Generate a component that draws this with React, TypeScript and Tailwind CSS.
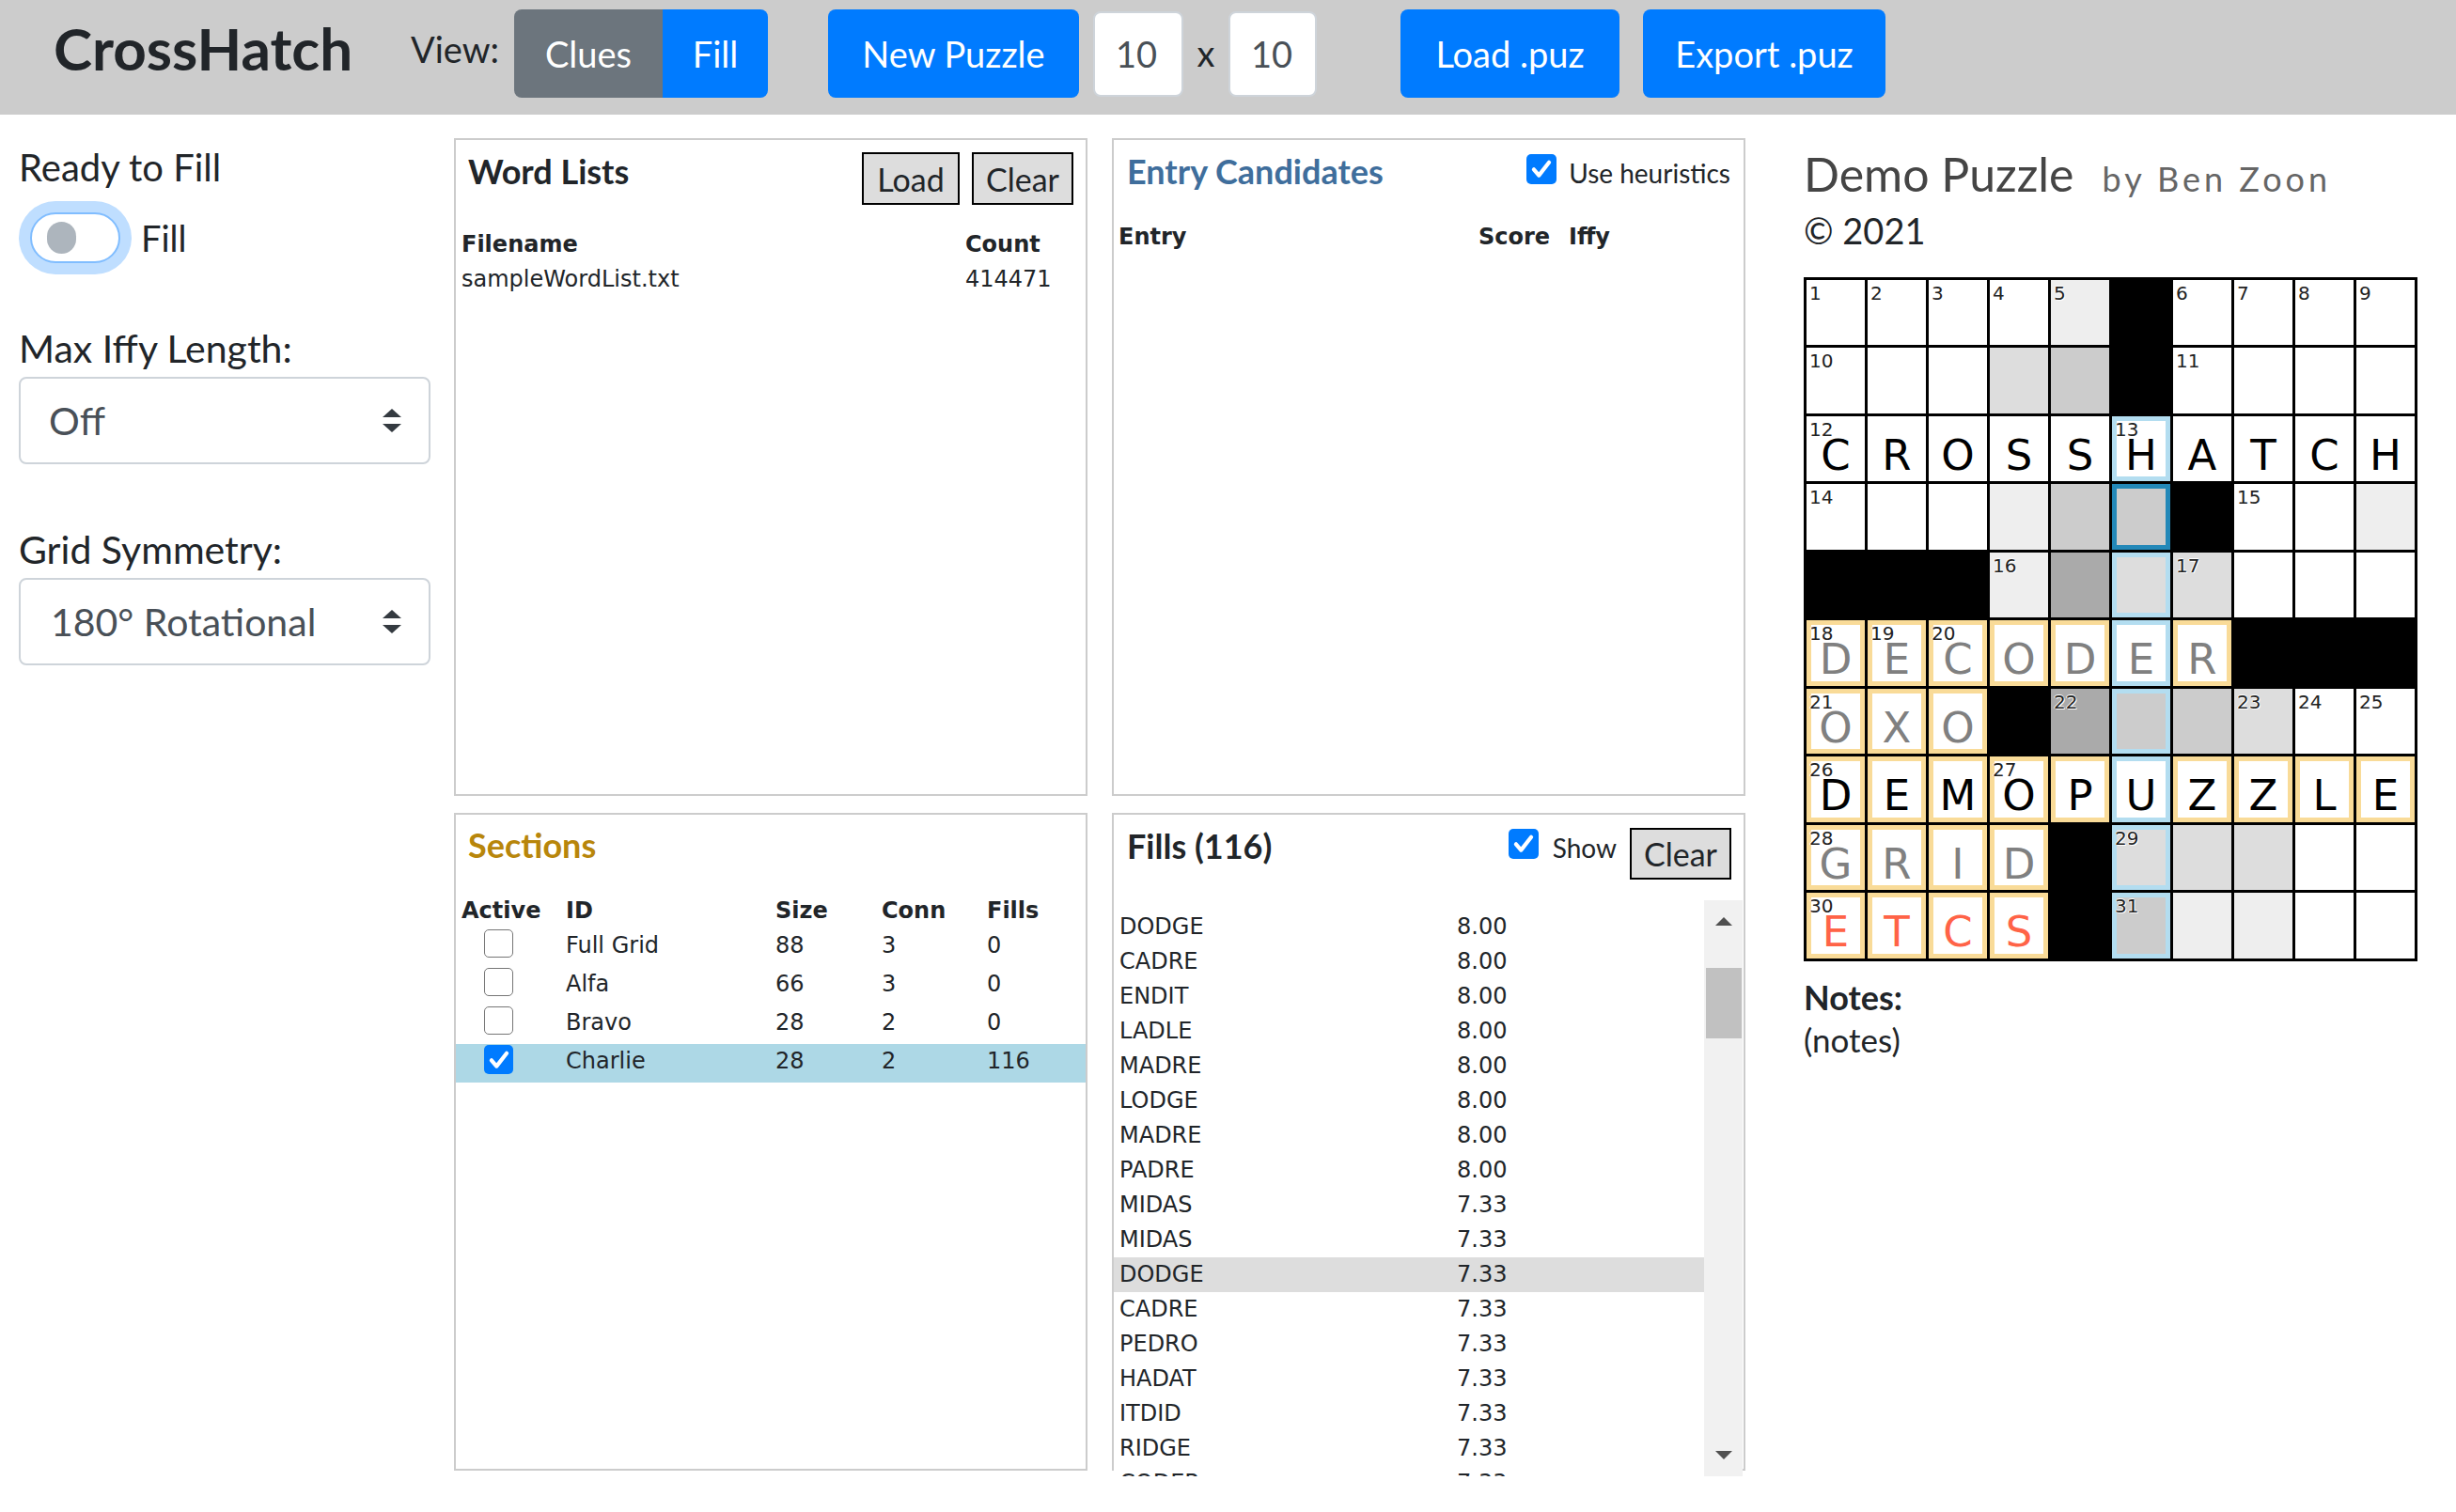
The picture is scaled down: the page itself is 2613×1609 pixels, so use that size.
import React from 'react';

type Cell = { b: string; n?: string; l?: string; c?: string; r?: string };

const BG: Record<string, string> = {
  w: 'bg-white',
  e: 'bg-[#eeeeee]',
  d: 'bg-[#dddddd]',
  c: 'bg-[#cccccc]',
  a: 'bg-[#aaaaaa]',
  B: 'bg-black',
};
const RING: Record<string, string> = {
  y: 'shadow-[inset_0_0_0_5px_#f9db98]',
  l: 'shadow-[inset_0_0_0_5px_#b3ddf0]',
  s: 'shadow-[inset_0_0_0_5px_#2388b8]',
};
const COL: Record<string, string> = {
  k: 'text-black',
  g: 'text-[#808080]',
  r: 'text-[#ff6347]',
};

const ROWS: string[][] = [
  ['w:1', 'w:2', 'w:3', 'w:4', 'e:5', 'B', 'w:6', 'w:7', 'w:8', 'w:9'],
  ['w:10', 'w', 'w', 'd', 'c', 'B', 'w:11', 'w', 'w', 'w'],
  ['w:12:C:k', 'w::R:k', 'w::O:k', 'w::S:k', 'w::S:k', 'w:13:H:k:l', 'w::A:k', 'w::T:k', 'w::C:k', 'w::H:k'],
  ['w:14', 'w', 'w', 'e', 'c', 'c::::s', 'B', 'w:15', 'w', 'e'],
  ['B', 'B', 'B', 'e:16', 'a', 'd::::l', 'd:17', 'w', 'w', 'w'],
  ['w:18:D:g:y', 'w:19:E:g:y', 'w:20:C:g:y', 'w::O:g:y', 'w::D:g:y', 'w::E:g:l', 'w::R:g:y', 'B', 'B', 'B'],
  ['w:21:O:g:y', 'w::X:g:y', 'w::O:g:y', 'B', 'a:22', 'c::::l', 'c', 'd:23', 'w:24', 'w:25'],
  ['w:26:D:k:y', 'w::E:k:y', 'w::M:k:y', 'w:27:O:k:y', 'w::P:k:y', 'w::U:k:l', 'w::Z:k:y', 'w::Z:k:y', 'w::L:k:y', 'w::E:k:y'],
  ['w:28:G:g:y', 'w::R:g:y', 'w::I:g:y', 'w::D:g:y', 'B', 'd:29:::l', 'd', 'd', 'w', 'w'],
  ['w:30:E:r:y', 'w::T:r:y', 'w::C:r:y', 'w::S:r:y', 'B', 'c:31:::l', 'e', 'e', 'w', 'w'],
];

function parse(s: string): Cell {
  const [b, n, l, c, r] = s.split(':');
  return { b, n: n || undefined, l: l || undefined, c: c || undefined, r: r || undefined };
}

const FILLS: [string, string][] = [
  ['DODGE', '8.00'], ['CADRE', '8.00'], ['ENDIT', '8.00'], ['LADLE', '8.00'], ['MADRE', '8.00'],
  ['LODGE', '8.00'], ['MADRE', '8.00'], ['PADRE', '8.00'], ['MIDAS', '7.33'], ['MIDAS', '7.33'],
  ['DODGE', '7.33'], ['CADRE', '7.33'], ['PEDRO', '7.33'], ['HADAT', '7.33'], ['ITDID', '7.33'],
  ['RIDGE', '7.33'], ['CODER', '7.33'],
];

const SECTIONS = [
  { id: 'Full Grid', size: '88', conn: '3', fills: '0', on: false },
  { id: 'Alfa', size: '66', conn: '3', fills: '0', on: false },
  { id: 'Bravo', size: '28', conn: '2', fills: '0', on: false },
  { id: 'Charlie', size: '28', conn: '2', fills: '116', on: true },
];

function CheckIcon() {
  return (
    <svg viewBox="0 0 16 16" className="w-[24px] h-[24px]">
      <path d="M2.6 8.2 L6.2 12.4 L13.4 3.2" fill="none" stroke="white" strokeWidth="2.8" strokeLinecap="round" strokeLinejoin="round" />
    </svg>
  );
}

function BlueCheck({ className }: { className?: string }) {
  return (
    <div className={`w-[32px] h-[32px] rounded-[5px] bg-[#007bff] flex items-center justify-center shrink-0 ${className ?? ''}`}>
      <CheckIcon />
    </div>
  );
}

function SelectArrows() {
  return (
    <svg viewBox="0 0 20 25" className="w-[20px] h-[25px]">
      <path d="M0 9 L10 0 L20 9 Z" fill="#343a40" />
      <path d="M0 16 L20 16 L10 25 Z" fill="#343a40" />
    </svg>
  );
}

function GridCell({ cell }: { cell: Cell }) {
  return (
    <div className={`relative ${BG[cell.b]} ${cell.r ? RING[cell.r] : ''}`}>
      {cell.n && (
        <span className="absolute left-[3px] top-[2px] font-['DejaVu_Sans',sans-serif] text-[20px] leading-[24px] text-[#222] [text-shadow:1px_1px_0_#fff,-1px_0_0_#fff,0_-1px_0_#fff]">
          {cell.n}
        </span>
      )}
      {cell.l && (
        <div className={`pt-[19px] text-center font-['DejaVu_Sans',sans-serif] text-[45px] leading-[45px] ${cell.c ? COL[cell.c] : ''}`}>
          {cell.l}
        </div>
      )}
    </div>
  );
}

export default function App() {
  return (
    <div className="w-[2613px] h-[1609px] overflow-hidden bg-white font-['Lato',sans-serif] text-[#212529]">
      {/* Header */}
      <header className="h-[122px] bg-[#cccccc] flex items-start pt-[10px]">
        <div className="ml-[57px] w-[380px] mt-[3px] text-[62px] leading-[76px] font-bold">CrossHatch</div>
        <div className="w-[110px] mt-[17px] text-[38px] leading-[50px]">View:</div>
        <div className="flex w-[270px] h-[94px] text-white text-[38px]">
          <div className="w-[158px] h-full bg-[#6c757d] rounded-l-[8px] flex items-center justify-center">Clues</div>
          <div className="w-[112px] h-full bg-[#007bff] rounded-r-[8px] flex items-center justify-center">Fill</div>
        </div>
        <div className="ml-[64px] w-[267px] h-[94px] bg-[#007bff] rounded-[8px] text-white text-[38px] flex items-center justify-center">New Puzzle</div>
        <div className="ml-[15px] mt-[2px] w-[96px] h-[91px] bg-white rounded-[8px] border-2 border-[#ced4da] pl-[22px] flex items-center text-[38px] text-[#495057]">10</div>
        <div className="w-[48px] mt-[21px] text-center text-[38px] leading-[50px]">x</div>
        <div className="mt-[2px] w-[94px] h-[91px] bg-white rounded-[8px] border-2 border-[#ced4da] pl-[22px] flex items-center text-[38px] text-[#495057]">10</div>
        <div className="ml-[89px] w-[233px] h-[94px] bg-[#007bff] rounded-[8px] text-white text-[38px] flex items-center justify-center">Load .puz</div>
        <div className="ml-[25px] w-[258px] h-[94px] bg-[#007bff] rounded-[8px] text-white text-[38px] flex items-center justify-center">Export .puz</div>
      </header>

      <div className="flex items-start">
        {/* Sidebar */}
        <aside className="w-[458px] shrink-0 pl-[20px] pt-[28px]">
          <div className="text-[40px] leading-[57px]">Ready to Fill</div>
          <div className="h-[92px] flex items-center">
            <div className="ml-[12px] w-[96px] h-[54px] rounded-full border-2 border-[#80bdff] bg-white shadow-[0_0_0_12px_#bfdeff] flex items-center">
              <div className="ml-[16px] w-[31px] h-[34px] rounded-full bg-[#adb5bd]" />
            </div>
            <span className="ml-[22px] text-[38px] leading-[57px]">Fill</span>
          </div>
          <div className="mt-[43px] text-[41px] leading-[57px]">Max Iffy Length:</div>
          <div className="mt-[2px] w-[438px] h-[93px] rounded-[8px] border-2 border-[#ced4da] pl-[30px] pr-[29px] flex items-center justify-between text-[41px] leading-[57px] text-[#495057]">
            <span>Off</span>
            <SelectArrows />
          </div>
          <div className="mt-[62px] text-[41px] leading-[57px]">Grid Symmetry:</div>
          <div className="mt-[2px] w-[438px] h-[93px] rounded-[8px] border-2 border-[#ced4da] pl-[32px] pr-[29px] flex items-center justify-between text-[41px] leading-[57px] text-[#495057]">
            <span>180° Rotational</span>
            <SelectArrows />
          </div>
        </aside>

        {/* Panels */}
        <div className="ml-[25px] mt-[25px] grid grid-cols-[674px_674px] grid-rows-[700px_700px] gap-x-[26px] gap-y-[18px] shrink-0">
          {/* Word Lists */}
          <div className="border-2 border-[#cccccc]">
            <div className="flex items-start justify-between pt-[13px] pl-[13px] pr-[13px]">
              <div className="font-bold text-[36px] leading-[40px]">Word Lists</div>
              <div className="flex gap-[13px]">
                <div className="w-[104px] h-[56px] bg-[#dddddd] border-2 border-black flex items-center justify-center text-[34px]">Load</div>
                <div className="w-[108px] h-[56px] bg-[#dddddd] border-2 border-black flex items-center justify-center text-[34px]">Clear</div>
              </div>
            </div>
            <div className="mt-[24px] pl-[6px] grid grid-cols-[536px_1fr] font-['DejaVu_Sans',sans-serif] text-[24px] leading-[37px]">
              <div className="font-bold">Filename</div>
              <div className="font-bold">Count</div>
              <div>sampleWordList.txt</div>
              <div>414471</div>
            </div>
          </div>

          {/* Entry Candidates */}
          <div className="border-2 border-[#cccccc]">
            <div className="flex items-start justify-between pt-[13px] pl-[14px] pr-[14px]">
              <div className="font-bold text-[36px] leading-[40px] text-[#3f6e9c]">Entry Candidates</div>
              <div className="flex items-start">
                <BlueCheck className="mt-[2px]" />
                <span className="ml-[13px] mt-[2px] text-[28px] leading-[40px]">Use heuristics</span>
              </div>
            </div>
            <div className="mt-[30px] pl-[5px] grid grid-cols-[383px_96px_1fr] font-['DejaVu_Sans',sans-serif] text-[24px] leading-[37px] font-bold">
              <div>Entry</div>
              <div>Score</div>
              <div>Iffy</div>
            </div>
          </div>

          {/* Sections */}
          <div className="border-2 border-[#cccccc]">
            <div className="pt-[12px] pl-[13px] font-bold text-[36px] leading-[40px] text-[#b8860b]">Sections</div>
            <div className="mt-[32px] font-['DejaVu_Sans',sans-serif] text-[24px] leading-[37px]">
              <div className="pl-[6px] grid grid-cols-[111px_223px_113px_112px_1fr] h-[37px] font-bold">
                <div>Active</div>
                <div>ID</div>
                <div>Size</div>
                <div>Conn</div>
                <div>Fills</div>
              </div>
              {SECTIONS.map((s) => (
                <div
                  key={s.id}
                  className={`pl-[6px] grid grid-cols-[111px_223px_113px_112px_1fr] h-[41px] ${s.on ? 'bg-[#add8e6]' : ''}`}
                >
                  <div className="pl-[24px] pt-[1px]">
                    {s.on ? (
                      <div className="w-[31px] h-[31px] rounded-[5px] bg-[#007bff] flex items-center justify-center">
                        <CheckIcon />
                      </div>
                    ) : (
                      <div className="w-[31px] h-[30px] rounded-[5px] border-[1.5px] border-[#767676] bg-white" />
                    )}
                  </div>
                  <div>{s.id}</div>
                  <div>{s.size}</div>
                  <div>{s.conn}</div>
                  <div>{s.fills}</div>
                </div>
              ))}
            </div>
          </div>

          {/* Fills */}
          <div className="border-2 border-[#cccccc]">
            <div className="flex items-start justify-between pt-[13px] pl-[14px] pr-[13px]">
              <div className="font-bold text-[36px] leading-[40px]">Fills (116)</div>
              <div className="flex items-start">
                <BlueCheck className="mt-[2px]" />
                <span className="ml-[15px] mt-[2px] text-[28px] leading-[40px]">Show</span>
                <div className="ml-[14px] mt-[1px] w-[108px] h-[55px] bg-[#dddddd] border-2 border-black flex items-center justify-center text-[34px]">Clear</div>
              </div>
            </div>
            <div className="mt-[22px] flex h-[613px] w-[669px] bg-white relative">
              <div className="w-[628px] h-full overflow-hidden pt-[10px] font-['DejaVu_Sans',sans-serif] text-[24px] leading-[37px]">
                {FILLS.map(([w, s], i) => (
                  <div key={i} className={`flex h-[37px] pl-[6px] ${i === 10 ? 'bg-[#dddddd]' : ''}`}>
                    <div className="w-[359px]">{w}</div>
                    <div>{s}</div>
                  </div>
                ))}
              </div>
              <div className="w-[41px] h-full bg-[#f1f1f1] flex flex-col items-center">
                <svg viewBox="0 0 18 9" className="mt-[18px] w-[18px] h-[9px]">
                  <path d="M0 9 L9 0 L18 9 Z" fill="#505050" />
                </svg>
                <div className="mt-[45px] w-[38px] h-[75px] bg-[#c1c1c1]" />
                <svg viewBox="0 0 18 9" className="mt-[439px] w-[18px] h-[9px]">
                  <path d="M0 0 L18 0 L9 9 Z" fill="#505050" />
                </svg>
              </div>
            </div>
          </div>
        </div>

        {/* Puzzle */}
        <div className="ml-[62px] pt-[33px] shrink-0">
          <div className="flex items-baseline">
            <span className="text-[50px] leading-[60px] text-[#454545]">Demo Puzzle</span>
            <span className="ml-[30px] text-[36px] tracking-[4px] text-[#666666]">by Ben Zoon</span>
          </div>
          <div className="mt-[4px] text-[38px] leading-[48px]">© 2021</div>
          <div className="mt-[26px] w-fit grid grid-cols-[repeat(10,62px)] grid-rows-[69px_70px_69px_70px_69px_70px_69px_70px_69px_70px] gap-[3px] bg-black border-[3px] border-black">
            {ROWS.map((row, r) =>
              row.map((s, c) => <GridCell key={`${r}-${c}`} cell={parse(s)} />)
            )}
          </div>
          <div className="mt-[16px] font-bold text-[36px] leading-[45px]">Notes:</div>
          <div className="text-[35px] leading-[45px]">(notes)</div>
        </div>
      </div>
    </div>
  );
}
